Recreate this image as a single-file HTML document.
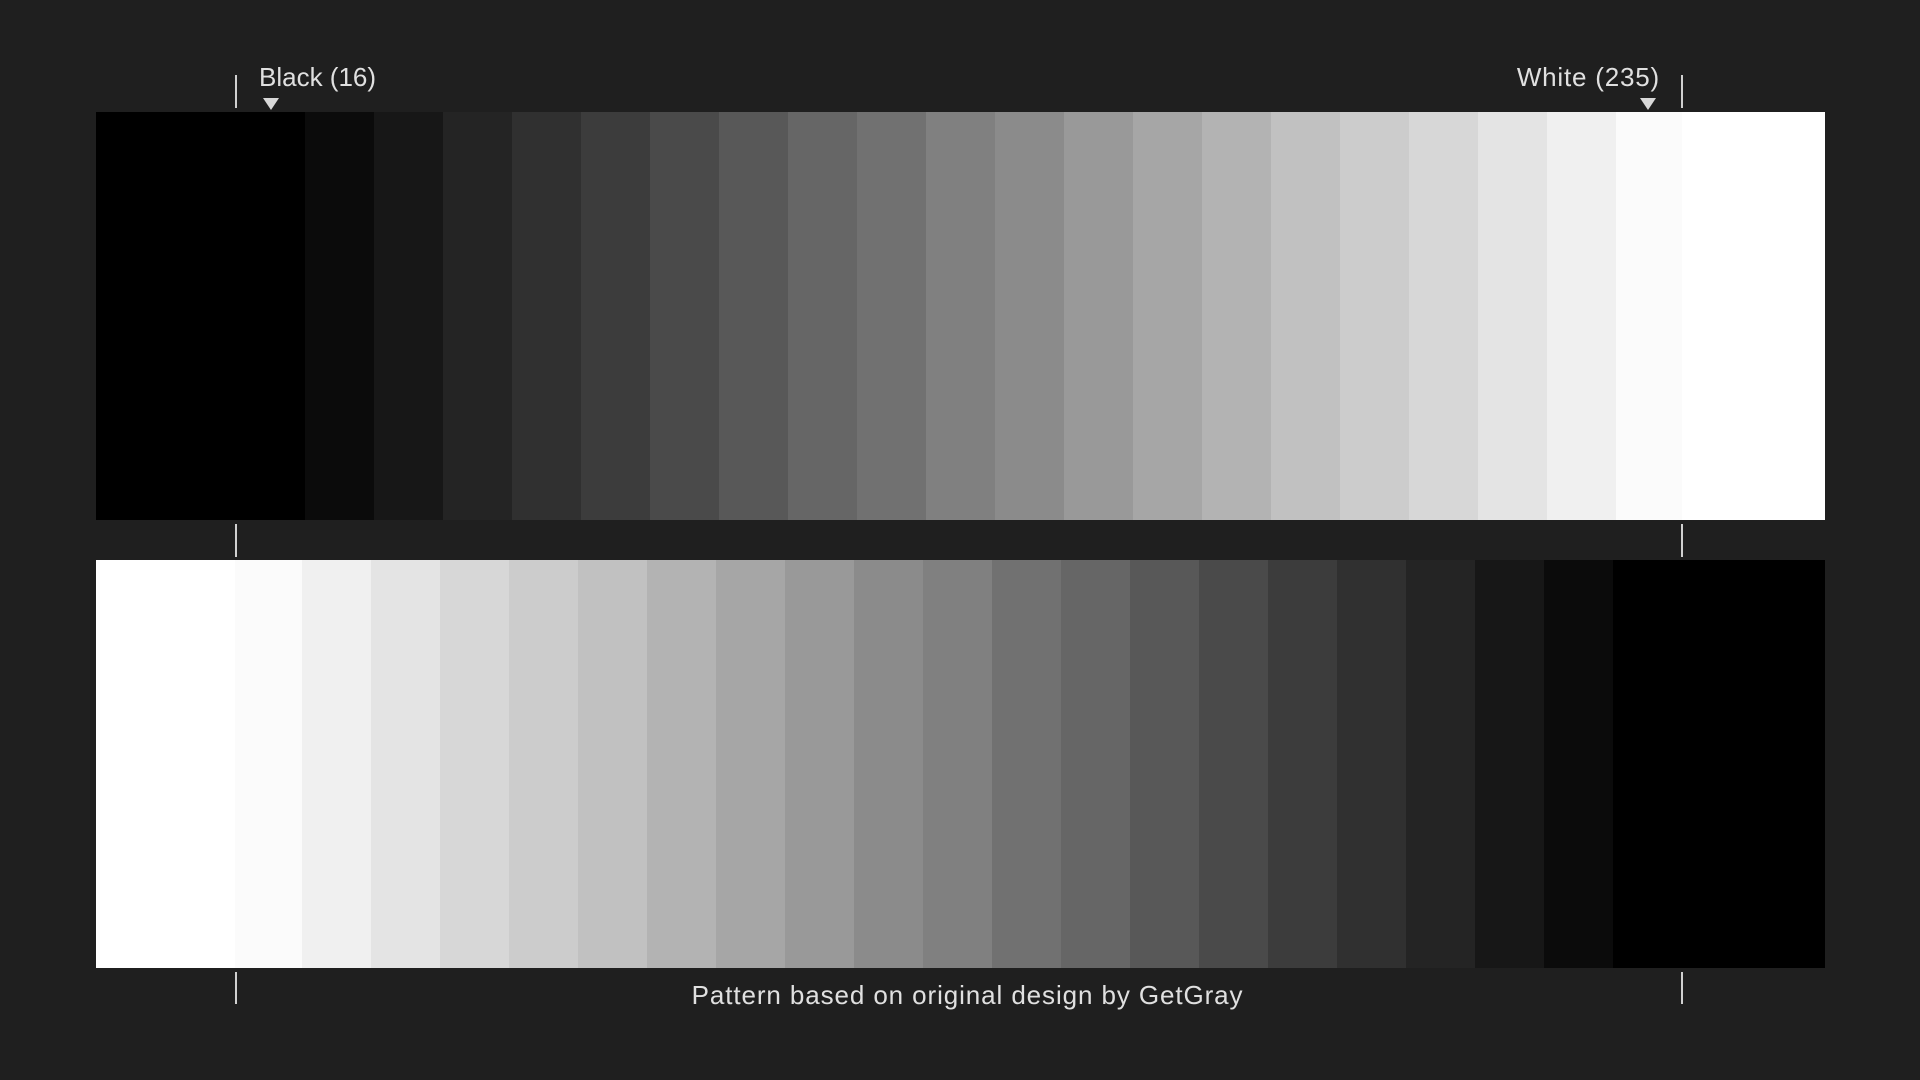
<!DOCTYPE html>
<html><head><meta charset="utf-8"><style>
html,body{margin:0;padding:0;background:#1f1f1f;width:1920px;height:1080px;overflow:hidden;font-family:"Liberation Sans",sans-serif;color:#e0e0e0}
.bar{position:absolute;left:96px;width:1729px;display:flex}
.bar div{height:100%}
.t{position:absolute;width:2px;background:#d0d0d0}
.tri{position:absolute;width:0;height:0;border-left:8px solid transparent;border-right:8px solid transparent;border-top:12px solid #d8d8d8}
.lbl{position:absolute;font-size:26px;line-height:30px}
</style></head><body>
<div class="bar" style="top:112px;height:408px">
<div style="width:209px;background:#000"></div>
<div style="width:69px;background:#0b0b0b"></div>
<div style="width:69px;background:#171717"></div>
<div style="width:69px;background:#242424"></div>
<div style="width:69px;background:#303030"></div>
<div style="width:69px;background:#3c3c3c"></div>
<div style="width:69px;background:#4a4a4a"></div>
<div style="width:69px;background:#585858"></div>
<div style="width:69px;background:#666"></div>
<div style="width:69px;background:#717171"></div>
<div style="width:69px;background:#808080"></div>
<div style="width:69px;background:#8b8b8b"></div>
<div style="width:69px;background:#999"></div>
<div style="width:69px;background:#a6a6a6"></div>
<div style="width:69px;background:#b3b3b3"></div>
<div style="width:69px;background:#c1c1c1"></div>
<div style="width:69px;background:#cccccc"></div>
<div style="width:69px;background:#d7d7d7"></div>
<div style="width:69px;background:#e4e4e4"></div>
<div style="width:69px;background:#f0f0f0"></div>
<div style="width:66px;background:#fbfbfb"></div>
<div style="flex:1;background:#fff"></div>
</div>
<div class="bar" style="top:560px;height:408px">
<div style="width:139px;background:#fff"></div>
<div style="width:67px;background:#fbfbfb"></div>
<div style="width:69px;background:#f0f0f0"></div>
<div style="width:69px;background:#e4e4e4"></div>
<div style="width:69px;background:#d7d7d7"></div>
<div style="width:69px;background:#cccccc"></div>
<div style="width:69px;background:#c1c1c1"></div>
<div style="width:69px;background:#b3b3b3"></div>
<div style="width:69px;background:#a6a6a6"></div>
<div style="width:69px;background:#999"></div>
<div style="width:69px;background:#8b8b8b"></div>
<div style="width:69px;background:#808080"></div>
<div style="width:69px;background:#717171"></div>
<div style="width:69px;background:#666"></div>
<div style="width:69px;background:#585858"></div>
<div style="width:69px;background:#4a4a4a"></div>
<div style="width:69px;background:#3c3c3c"></div>
<div style="width:69px;background:#303030"></div>
<div style="width:69px;background:#242424"></div>
<div style="width:69px;background:#171717"></div>
<div style="width:69px;background:#0b0b0b"></div>
<div style="flex:1;background:#000"></div>
</div>
<div class="t" style="left:235px;top:75px;height:33px"></div>
<div class="t" style="left:1681px;top:75px;height:33px"></div>
<div class="t" style="left:235px;top:524px;height:33px"></div>
<div class="t" style="left:1681px;top:524px;height:33px"></div>
<div class="t" style="left:235px;top:972px;height:32px"></div>
<div class="t" style="left:1681px;top:972px;height:32px"></div>
<div class="tri" style="left:263px;top:98px"></div>
<div class="tri" style="left:1640px;top:98px"></div>
<div class="lbl" style="left:259px;top:62px">Black (16)</div>
<div class="lbl" style="left:1460px;top:62px;width:200px;text-align:right;letter-spacing:0.8px">White (235)</div>
<div class="lbl" style="left:0;width:1935px;top:980px;text-align:center;letter-spacing:0.9px">Pattern based on original design by GetGray</div>
</body></html>
